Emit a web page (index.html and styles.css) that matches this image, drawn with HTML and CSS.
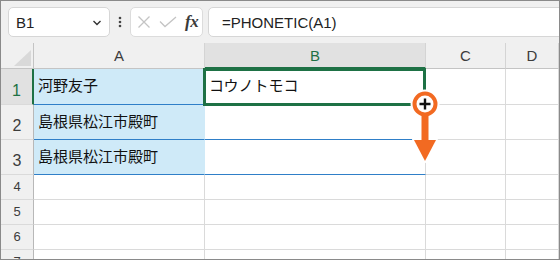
FILE: index.html
```html
<!DOCTYPE html>
<html lang="ja">
<head>
<meta charset="utf-8">
<link rel="stylesheet" href="styles.css">
</head>
<body>
<div class="frame">
  <div class="toolbar">
    <div class="namebox">
      <span class="name">B1</span>
      <svg class="chev" width="10" height="8" viewBox="0 0 10 8"><polyline points="1.5,2 5,5.5 8.5,2" fill="none" stroke="#333" stroke-width="1.4"/></svg>
    </div>
    <div class="dots">
      <svg width="4" height="12" viewBox="0 0 4 12"><circle cx="2" cy="2" r="1.3" fill="#444"/><circle cx="2" cy="6" r="1.3" fill="#444"/><circle cx="2" cy="10" r="1.3" fill="#444"/></svg>
    </div>
    <div class="fnbox">
      <svg width="14" height="14" viewBox="0 0 14 14"><path d="M1.5 1.5 L12.5 12.5 M12.5 1.5 L1.5 12.5" stroke="#c4c4c4" stroke-width="1.3" fill="none"/></svg>
      <svg width="18" height="14" viewBox="0 0 18 14"><polyline points="1,6.5 6,11.5 17,2" stroke="#c4c4c4" stroke-width="1.3" fill="none"/></svg>
      <span class="fx">fx</span>
    </div>
    <div class="formula">=PHONETIC(A1)</div>
  </div>
  <div class="sheet">
    <div class="grid">
      <div class="c h corner"><svg width="32" height="25" viewBox="0 0 32 25"><polygon points="13,23 30,23 30,7" fill="#d9d9d9"/></svg></div>
      <div class="c h">A</div>
      <div class="c h hsel">B</div>
      <div class="c h">C</div>
      <div class="c h">D</div>

      <div class="c r big rsel">1</div>
      <div class="c t fill">河野友子</div>
      <div class="c t blue">コウノトモコ</div>
      <div class="c"></div>
      <div class="c"></div>

      <div class="c r big">2</div>
      <div class="c t fill">島根県松江市殿町</div>
      <div class="c t blue"></div>
      <div class="c"></div>
      <div class="c"></div>

      <div class="c r big">3</div>
      <div class="c t fill">島根県松江市殿町</div>
      <div class="c t blue"></div>
      <div class="c"></div>
      <div class="c"></div>

      <div class="c r">4</div>
      <div class="c"></div>
      <div class="c"></div>
      <div class="c"></div>
      <div class="c"></div>

      <div class="c r">5</div>
      <div class="c"></div>
      <div class="c"></div>
      <div class="c"></div>
      <div class="c"></div>

      <div class="c r">6</div>
      <div class="c"></div>
      <div class="c"></div>
      <div class="c"></div>
      <div class="c"></div>

      <div class="c r">7</div>
      <div class="c"></div>
      <div class="c"></div>
      <div class="c"></div>
      <div class="c"></div>
    </div>
    <div class="selection"></div>
    <svg class="handle" width="50" height="80" viewBox="0 0 50 80">
      <g fill="#fff" stroke="#fff" stroke-width="4" stroke-linejoin="round">
        <circle cx="25" cy="19" r="12.5"/>
        <rect x="21.5" y="30" width="7" height="26"/>
        <polygon points="14,55 36,55 25,76"/>
      </g>
      <rect x="21.5" y="30" width="7" height="26" fill="#f26a22"/>
      <polygon points="14,55 36,55 25,76" fill="#f26a22"/>
      <circle cx="25" cy="19" r="10.5" fill="#fff" stroke="#f26a22" stroke-width="4"/>
      <path d="M19.5 19 H30.5 M25 13.5 V24.5" stroke="#111" stroke-width="2.4"/>
    </svg>
  </div>
</div>
</body>
</html>
```
FILE: styles.css
```css
* { box-sizing: border-box; }
html, body { margin: 0; padding: 0; background: #fff; }
.frame {
  width: 560px;
  height: 260px;
  border: 1px solid #8a8a8a;
  background: #f0f0f0;
  overflow: hidden;
  position: relative;
  font-family: "Liberation Sans", Arial, sans-serif;
}
.toolbar {
  height: 42px;
  display: flex;
  align-items: flex-start;
  padding: 6px 0 0 7px;
}
.namebox {
  width: 102px;
  height: 30px;
  background: #fff;
  border: 1px solid #d6d6d6;
  border-radius: 5px;
  display: flex;
  align-items: center;
  justify-content: space-between;
  padding: 0 7px 0 7px;
}
.name { font-size: 15px; color: #222; }
.chev { display: block; margin-top: 1px; }
.dots {
  width: 20px;
  height: 30px;
  display: flex;
  align-items: center;
  justify-content: center;
}
.dots svg { display: block; }
.fnbox {
  width: 73px;
  height: 30px;
  background: #fff;
  border: 1px solid #dcdcdc;
  border-radius: 5px;
  display: flex;
  align-items: center;
  padding: 0 0 0 6px;
  gap: 8px;
}
.fnbox svg { display: block; }
.fx {
  font-family: "Liberation Serif", "Times New Roman", serif;
  font-style: italic;
  font-weight: bold;
  font-size: 17px;
  color: #3a3a3a;
  letter-spacing: -0.5px;
}
.formula {
  flex: 1;
  height: 30px;
  margin-left: 5px;
  margin-right: -8px;
  background: #fff;
  border: 1px solid #d6d6d6;
  border-radius: 5px;
  display: flex;
  align-items: center;
  padding-left: 13px;
  font-size: 15px;
  color: #222;
}
.sheet { position: relative; }
.grid {
  display: grid;
  grid-template-columns: 33px 171px 221px 80px 1fr;
  grid-template-rows: 26px 36px 35px 35px 25px 25px 25px 25px;
  background: #fff;
}
.c {
  border-right: 1px solid #dadada;
  border-bottom: 1px solid #dadada;
  background: #fff;
}
.h {
  background: #f0f0f0;
  border-right: 1px solid #d4d4d4;
  border-bottom: 1px solid #c4c4c4;
  display: flex;
  align-items: center;
  justify-content: center;
  font-size: 15px;
  color: #3c3c3c;
}
.corner { display: block; border-right-color: #c4c4c4; }
.corner svg { display: block; }
.hsel {
  background: #e1e1e1;
  color: #1e7145;
  border-bottom: 2px solid #1e7145;
}
.r {
  background: #f0f0f0;
  border-right: 1px solid #b8b8b8;
  border-bottom: 1px solid #dadada;
  display: flex;
  align-items: flex-end;
  justify-content: center;
  padding-bottom: 4px;
  font-size: 13px;
  line-height: 17px;
  color: #3c3c3c;
}
.big {
  font-size: 16px;
  line-height: 20px;
  padding-bottom: 3px;
}
.rsel {
  background: #e1e1e1;
  color: #1e7145;
  border-right: 2px solid #1e7145;
}
.t {
  display: flex;
  align-items: center;
  padding: 0 0 3px 4px;
  font-family: "Noto Sans CJK JP", "Noto Sans", sans-serif;
  font-size: 15px;
  line-height: 20px;
  color: #111;
}
.fill {
  background: #cfeaf8;
  border-right-color: #cfeaf8;
  border-bottom-color: #2f7fc8;
}
.blue { border-bottom-color: #2f7fc8; }
.selection {
  position: absolute;
  left: 202px;
  top: 25px;
  width: 223px;
  height: 38px;
  border: 3px solid #1e7145;
}
.handle {
  position: absolute;
  left: 399px;
  top: 42px;
}
```
